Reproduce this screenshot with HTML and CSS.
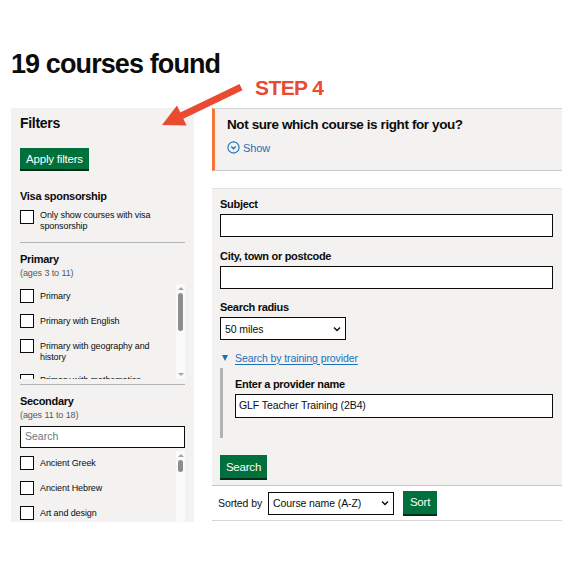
FILE: index.html
```html
<!DOCTYPE html>
<html lang="en">
<head>
<meta charset="utf-8">
<title>19 courses found</title>
<link rel="stylesheet" href="styles.css">
</head>
<body>
<div class="page">
  <h1 class="title">19 courses found</h1>
  <div class="layout">
    <aside class="filters">
      <h2 class="filters-title">Filters</h2>
      <button class="btn btn-apply" type="button">Apply filters</button>

      <h3 class="group-title group-visa">Visa sponsorship</h3>
      <label class="check check-visa"><span class="box"></span><span class="check-text">Only show courses with visa sponsorship</span></label>
      <hr class="sep">

      <h3 class="group-title">Primary</h3>
      <p class="hint">(ages 3 to 11)</p>
      <div class="scroll scroll-primary">
        <div class="scroll-list">
          <label class="check"><span class="box"></span><span class="check-text">Primary</span></label>
          <label class="check"><span class="box"></span><span class="check-text">Primary with English</span></label>
          <label class="check"><span class="box"></span><span class="check-text">Primary with geography and history</span></label>
          <label class="check"><span class="box"></span><span class="check-text">Primary with mathematics</span></label>
        </div>
        <div class="scrollbar"><span class="arrow-up"></span><span class="thumb thumb-primary"></span><span class="arrow-down"></span></div>
      </div>
      <hr class="sep sep-2">

      <h3 class="group-title">Secondary</h3>
      <p class="hint">(ages 11 to 18)</p>
      <div class="search-box">Search</div>
      <div class="scroll scroll-secondary">
        <div class="scroll-list">
          <label class="check"><span class="box"></span><span class="check-text">Ancient Greek</span></label>
          <label class="check"><span class="box"></span><span class="check-text">Ancient Hebrew</span></label>
          <label class="check"><span class="box"></span><span class="check-text">Art and design</span></label>
        </div>
        <div class="scrollbar"><span class="arrow-up"></span><span class="thumb thumb-secondary"></span></div>
      </div>
    </aside>

    <main class="results">
      <section class="notsure">
        <h2 class="notsure-title">Not sure which course is right for you?</h2>
        <div class="show">
          <svg class="show-icon" width="13" height="13" viewBox="0 0 13 13"><circle cx="6.5" cy="6.5" r="5.6" fill="none" stroke="#1d70b8" stroke-width="1.1"/><path d="M4.3 5.6 L6.5 7.8 L8.7 5.6" fill="none" stroke="#1d70b8" stroke-width="1.4"/></svg>
          <span>Show</span>
        </div>
      </section>

      <section class="search-form">
        <label class="field-label">Subject</label>
        <div class="input"></div>
        <label class="field-label">City, town or postcode</label>
        <div class="input"></div>
        <label class="field-label">Search radius</label>
        <div class="select select-radius"><span>50 miles</span><svg width="8" height="6" viewBox="0 0 8 6"><path d="M1 1.5 L4 4.5 L7 1.5" fill="none" stroke="#0b0c0c" stroke-width="1.4"/></svg></div>
        <div class="provider-toggle"><span class="tri"></span><span class="provider-link">Search by training provider</span></div>
        <div class="provider-panel">
          <label class="field-label">Enter a provider name</label>
          <div class="input input-provider">GLF Teacher Training (2B4)</div>
        </div>
        <button class="btn btn-search" type="button">Search</button>
      </section>

      <div class="sort-row">
        <span class="sort-label">Sorted by</span>
        <div class="select select-sort"><span>Course name (A-Z)</span><svg width="8" height="6" viewBox="0 0 8 6"><path d="M1 1.5 L4 4.5 L7 1.5" fill="none" stroke="#0b0c0c" stroke-width="1.4"/></svg></div>
        <button class="btn btn-sort" type="button">Sort</button>
      </div>
    </main>
  </div>
</div>

<div class="annotation">
  <svg class="annot-arrow" width="100" height="60" viewBox="155 75 100 60"><polygon points="162,125 177,105.6 180.3,112.4 239.5,83.9 242.5,90.2 183.3,118.7 186.6,125.4" fill="#e94a31"/></svg>
  <span class="annot-text">STEP 4</span>
</div>
</body>
</html>
```

FILE: styles.css
```css
* { box-sizing: border-box; }
html, body { margin: 0; padding: 0; background: #ffffff; }
body {
  font-family: "Liberation Sans", Arial, sans-serif;
  color: #0b0c0c;
  position: relative;
  width: 580px;
  height: 580px;
  overflow: hidden;
}
.page { padding: 0 18px 0 11px; }
.title {
  margin: 48px 0 0 0;
  font-size: 27px;
  line-height: 32px;
  font-weight: 700;
  letter-spacing: -0.9px;
}
.layout {
  display: flex;
  gap: 18px;
  margin-top: 28px;
  align-items: flex-start;
}

/* ---------- Filters ---------- */
.filters {
  width: 183px;
  height: 414px;
  overflow: hidden;
  background: #f3f2f1;
  padding: 6px 9px 0 9px;
}
.filters-title {
  margin: 0;
  font-size: 14px;
  line-height: 18px;
  font-weight: 700;
  letter-spacing: -0.3px;
}
.btn {
  font-family: inherit;
  border: 0;
  background: #00703c;
  color: #fff;
  box-shadow: 0 2px 0 #002d18;
  padding: 0;
  cursor: pointer;
  font-weight: 400;
}
.btn-apply {
  display: block;
  margin-top: 16px;
  width: 69px;
  height: 21px;
  font-size: 11.5px;
  letter-spacing: -0.2px;
}
.group-title {
  margin: 8px 0 0 0;
  font-size: 11px;
  line-height: 16px;
  font-weight: 700;
  letter-spacing: -0.3px;
}
.group-visa { margin-top: 19px; }
.hint {
  margin: 0;
  font-size: 9px;
  line-height: 12px;
  color: #505a5f;
  letter-spacing: -0.1px;
}
.check {
  display: flex;
  align-items: flex-start;
  gap: 6px;
}
.box {
  flex: none;
  width: 14px;
  height: 14px;
  border: 1.5px solid #0b0c0c;
  background: #fff;
}
.check-text {
  font-size: 9px;
  line-height: 11px;
  padding-top: 1.5px;
  color: #0b0c0c;
  letter-spacing: -0.1px;
}
.check-visa { margin-top: 6px; }
.check-visa .check-text { padding-top: 0; }
.sep {
  margin: 10px 0 0 0;
  border: 0;
  border-top: 1px solid #b1b4b6;
}
.sep-2 { margin-top: 5px; }

.scroll {
  display: flex;
  justify-content: space-between;
  overflow: hidden;
}
.scroll-primary { margin-top: 5px; height: 95px; }
.scroll-secondary { margin-top: 3px; height: 80px; }
.scroll-list {
  display: flex;
  flex-direction: column;
  gap: 11px;
  padding-top: 5px;
  width: 150px;
}
.scrollbar {
  flex: none;
  width: 9px;
  background: #fafafa;
  display: flex;
  flex-direction: column;
  align-items: center;
}
.arrow-up {
  margin-top: 3px;
  width: 0; height: 0;
  border-left: 3px solid transparent;
  border-right: 3px solid transparent;
  border-bottom: 3px solid #a3a3a3;
}
.arrow-down {
  margin-top: auto;
  margin-bottom: 3px;
  width: 0; height: 0;
  border-left: 3px solid transparent;
  border-right: 3px solid transparent;
  border-top: 3px solid #a3a3a3;
}
.thumb {
  width: 5px;
  border-radius: 3px;
  background: #8e8e8e;
  margin-top: 3px;
}
.thumb-primary { height: 38px; }
.thumb-secondary { height: 12px; }
.search-box {
  margin-top: 5px;
  height: 22px;
  border: 1.5px solid #0b0c0c;
  background: #fff;
  font-size: 10.5px;
  line-height: 19px;
  padding-left: 4px;
  color: #6f777b;
}

/* ---------- Results ---------- */
.results {
  width: 350px;
  display: flex;
  flex-direction: column;
}
.notsure {
  height: 63px;
  background: #f3f2f1;
  border-left: 3px solid #f47738;
  border-top: 1px solid #d6d6d6;
  border-bottom: 1px solid #c8c8c8;
  padding: 7px 0 0 12px;
}
.notsure-title {
  margin: 0;
  font-size: 13.5px;
  line-height: 17px;
  font-weight: 700;
  letter-spacing: -0.4px;
}
.show {
  margin-top: 8px;
  display: flex;
  align-items: center;
  gap: 3px;
  color: #1d70b8;
  font-size: 11px;
  letter-spacing: -0.1px;
}
.show-icon { display: block; }

.search-form {
  margin-top: 17px;
  background: #f3f2f1;
  border-top: 1px solid #e3e3e3;
  border-bottom: 1px solid #c8c8c8;
  padding: 7px 9px 7px 8px;
  display: flex;
  flex-direction: column;
  align-items: flex-start;
}
.field-label {
  font-size: 11px;
  line-height: 16px;
  font-weight: 700;
  letter-spacing: -0.3px;
  margin-bottom: 2px;
}
.input {
  width: 100%;
  height: 23px;
  border: 1.5px solid #0b0c0c;
  background: #fff;
  margin-bottom: 10.5px;
  font-size: 10.5px;
  line-height: 20px;
  padding-left: 3px;
  letter-spacing: -0.1px;
}
.select {
  height: 23px;
  border: 1.5px solid #0b0c0c;
  background: #fff;
  display: flex;
  align-items: center;
  justify-content: space-between;
  padding: 0 4px 0 4px;
  font-size: 10.5px;
  letter-spacing: -0.1px;
}
.select-radius { width: 126px; }
.provider-toggle {
  margin-top: 10.5px;
  display: flex;
  align-items: center;
  gap: 7px;
  padding-left: 2px;
}
.tri {
  width: 0; height: 0;
  border-left: 3.5px solid transparent;
  border-right: 3.5px solid transparent;
  border-top: 6px solid #1d70b8;
}
.provider-link {
  font-size: 10.5px;
  line-height: 15px;
  color: #1d70b8;
  text-decoration: underline;
  text-underline-offset: 2px;
  letter-spacing: -0.1px;
}
.provider-panel {
  margin-top: 2.5px;
  width: 100%;
  border-left: 3px solid #b1b4b6;
  padding: 8px 0 20px 12px;
  display: flex;
  flex-direction: column;
}
.input-provider { margin-bottom: 0; height: 24px; }
.btn-search {
  margin-top: 17px;
  width: 47px;
  height: 23px;
  font-size: 11.5px;
  letter-spacing: -0.2px;
}
.sort-row {
  height: 35px;
  display: flex;
  align-items: center;
  padding-left: 6px;
  border-bottom: 1px solid #d6d6d6;
}
.sort-label {
  font-size: 10.5px;
  letter-spacing: -0.1px;
  margin-right: 6px;
}
.select-sort { width: 126px; height: 23px; }
.btn-sort {
  margin-left: 9px;
  width: 34px;
  height: 23px;
  font-size: 11.5px;
  letter-spacing: -0.2px;
  margin-top: -2px;
}

/* ---------- Annotation overlay ---------- */
.annotation {
  position: absolute;
  left: 0;
  top: 0;
  width: 580px;
  height: 580px;
  pointer-events: none;
}
.annot-arrow {
  position: absolute;
  left: 155px;
  top: 75px;
}
.annot-text {
  position: absolute;
  left: 255px;
  top: 76px;
  font-size: 21px;
  line-height: 24px;
  font-weight: 700;
  color: #e94a31;
  letter-spacing: -0.6px;
}
```
